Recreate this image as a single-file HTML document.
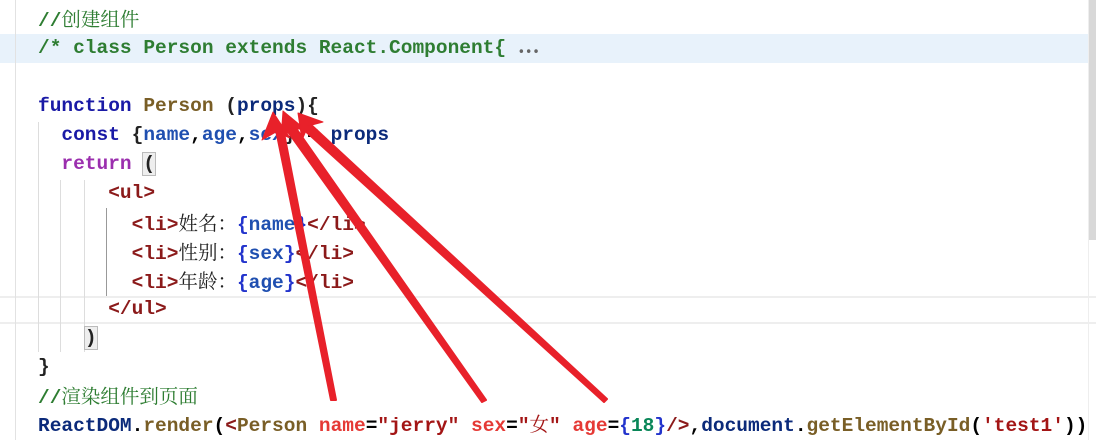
<!DOCTYPE html>
<html><head><meta charset="utf-8"><style>
body{margin:0;width:1096px;height:440px;background:#fff;overflow:hidden;position:relative;font-family:"Liberation Mono","Noto Sans CJK SC",monospace;font-size:19.5px;font-weight:bold}
.l{position:absolute;left:38px;white-space:pre;height:29px;line-height:29px}
.z{font-family:"Noto Serif CJK SC","Liberation Mono",serif;font-weight:normal}
.c{color:#2e7d32}.k{color:#1a1aa6}.f{color:#795e26}.v{color:#1f4fb0}.p{color:#222}.r{color:#9b2fae}.t{color:#8b1a1a}.a{color:#e53935}.s{color:#a31515}.n{color:#098658}.b{color:#2233cc}.d{color:#0b2a7a}
.g{position:absolute;width:1px;background:#ddd}
</style></head><body>
<div style="position:absolute;left:0;top:34px;width:1096px;height:29px;background:#e8f2fb"></div>
<div style="position:absolute;left:0;top:296px;width:1096px;height:2px;background:#eee"></div>
<div style="position:absolute;left:0;top:322px;width:1096px;height:2px;background:#eee"></div>
<div class="g" style="left:15px;top:0;height:440px;background:#e2e2e2"></div>
<div class="g" style="left:1088px;top:0;height:440px;background:#eee"></div>
<div style="position:absolute;left:1089px;top:0;width:7px;height:240px;background:#d8d8d8"></div>
<div class="g" style="left:38px;top:122px;height:230px"></div>
<div class="g" style="left:60px;top:180px;height:172px"></div>
<div class="g" style="left:84px;top:180px;height:172px"></div>
<div class="g" style="left:106px;top:208px;height:88px;background:#999"></div>
<div class="l c" style="top:4px">//<span class="z">创建组件</span></div>
<div class="l c" style="top:34px">/* class Person extends React.Component{ <span style="color:#666">⋯</span></div>
<div class="l" style="top:92px"><span class="k">function</span> <span class="f">Person</span> <span class="p">(</span><span class="d">props</span><span class="p">){</span></div>
<div class="l" style="top:121px">  <span class="k">const</span> <span class="p">{</span><span class="v">name</span>,<span class="v">age</span>,<span class="v">sex</span><span class="p">}</span> = <span class="d">props</span></div>
<div class="l" style="top:150px">  <span class="r">return</span> <span class="p" style="background:#eee;outline:1px solid #bbb">(</span></div>
<div class="l t" style="top:179px">      &lt;ul&gt;</div>
<div class="l t" style="top:208px">        &lt;li&gt;<span class="p z">姓名：</span><span class="b">{</span><span class="v">name</span><span class="b">}</span>&lt;/li&gt;</div>
<div class="l t" style="top:237px">        &lt;li&gt;<span class="p z">性别：</span><span class="b">{</span><span class="v">sex</span><span class="b">}</span>&lt;/li&gt;</div>
<div class="l t" style="top:266px">        &lt;li&gt;<span class="p z">年龄：</span><span class="b">{</span><span class="v">age</span><span class="b">}</span>&lt;/li&gt;</div>
<div class="l t" style="top:295px">      &lt;/ul&gt;</div>
<div class="l p" style="top:324px">    <span style="background:#eee;outline:1px solid #bbb">)</span></div>
<div class="l p" style="top:353px">}</div>
<div class="l c" style="top:381px">//<span class="z">渲染组件到页面</span></div>
<div class="l" style="top:409px"><span class="d">ReactDOM</span>.<span class="f">render</span>(<span class="t">&lt;</span><span class="f">Person</span> <span class="a">name</span>=<span class="s">"jerry"</span> <span class="a">sex</span>=<span class="s">"<span class="z">女</span>"</span> <span class="a">age</span>=<span class="b">{</span><span class="n">18</span><span class="b">}</span><span class="t">/&gt;</span>,<span class="d">document</span>.<span class="f">getElementById</span>(<span class="s">'test1'</span>))</div>
<svg width="1096" height="440" style="position:absolute;left:0;top:0">
<g fill="#e8212a" stroke="#e8212a" stroke-linejoin="round" stroke-linecap="round">
<polygon points="331,400 336,400 283,128 276,130" stroke-width="2"/>
<polygon points="273,112 262,140 276,132 290,138"/>
<polygon points="482,402 486,400 293,124 286,129" stroke-width="2"/>
<polygon points="283,111 281,140 292,128 306,130"/>
<polygon points="604,402 607,399 308,122 302,128" stroke-width="2"/>
<polygon points="298,113 302,140 308,126 323,122"/>
</g></svg>
</body></html>
